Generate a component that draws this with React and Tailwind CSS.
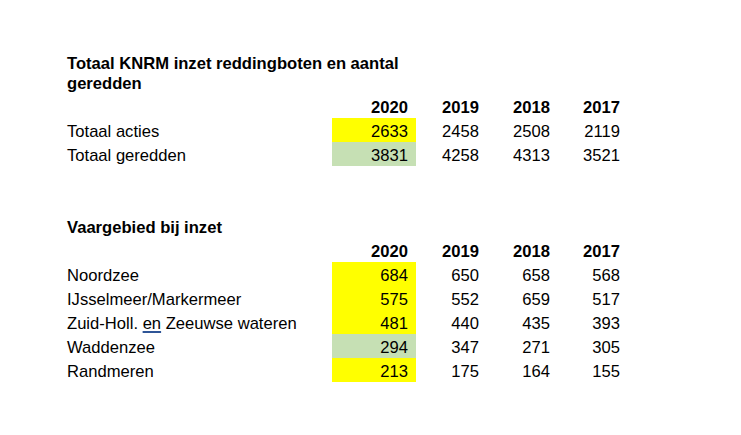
import React from 'react';

const yellow = 'bg-[#ffff00]';
const green = 'bg-[#c6e0b4]';

const totals = [
  { label: 'Totaal acties', values: [2633, 2458, 2508, 2119], bg: yellow },
  { label: 'Totaal geredden', values: [3831, 4258, 4313, 3521], bg: green },
];

const areas = [
  { label: 'Noordzee', values: [684, 650, 658, 568], bg: yellow },
  { label: 'IJsselmeer/Markermeer', values: [575, 552, 659, 517], bg: yellow },
  {
    label: (
      <>
        Zuid-Holl. <span className="underline decoration-[#2f5597] decoration-[1.5px] underline-offset-[2px]">en</span> Zeeuwse wateren
      </>
    ),
    values: [481, 440, 435, 393],
    bg: yellow,
  },
  { label: 'Waddenzee', values: [294, 347, 271, 305], bg: green },
  { label: 'Randmeren', values: [213, 175, 164, 155], bg: yellow },
];

const years = [2020, 2019, 2018, 2017];
const colWidths = ['w-[84px]', 'w-[71px]', 'w-[71px]', 'w-[70px]'];

function Row({ label, values, bg, bold }) {
  return (
    <div className={`flex h-[24px] items-end leading-[20px] ${bold ? 'font-bold' : ''}`}>
      <div className="w-[265px] whitespace-nowrap">{label}</div>
      {values.map((v, i) => (
        <div
          key={i}
          className={`${colWidths[i]} h-full flex items-end justify-end pr-[8px] ${i === 0 && bg ? bg : ''}`}
        >
          {v}
        </div>
      ))}
    </div>
  );
}

function Section({ title, rows, titleClass }) {
  return (
    <div>
      <div className={titleClass}>{title}</div>
      <Row label="" values={years} bold />
      {rows.map((r, i) => (
        <Row key={i} label={r.label} values={r.values} bg={r.bg} />
      ))}
    </div>
  );
}

export default function App() {
  return (
    <div
      className="w-[741px] h-[435px] bg-white text-black text-[16.6px] pt-[54px] pl-[67px]"
      style={{ fontFamily: '"Liberation Sans", Arial, sans-serif' }}
    >
      <Section
        title="Totaal KNRM inzet reddingboten en aantal geredden"
        titleClass="w-[349px] font-bold leading-[20px]"
        rows={totals}
      />
      <div className="h-[48px]" />
      <Section
        title="Vaargebied bij inzet"
        titleClass="h-[24px] flex items-end font-bold leading-[20px]"
        rows={areas}
      />
    </div>
  );
}
